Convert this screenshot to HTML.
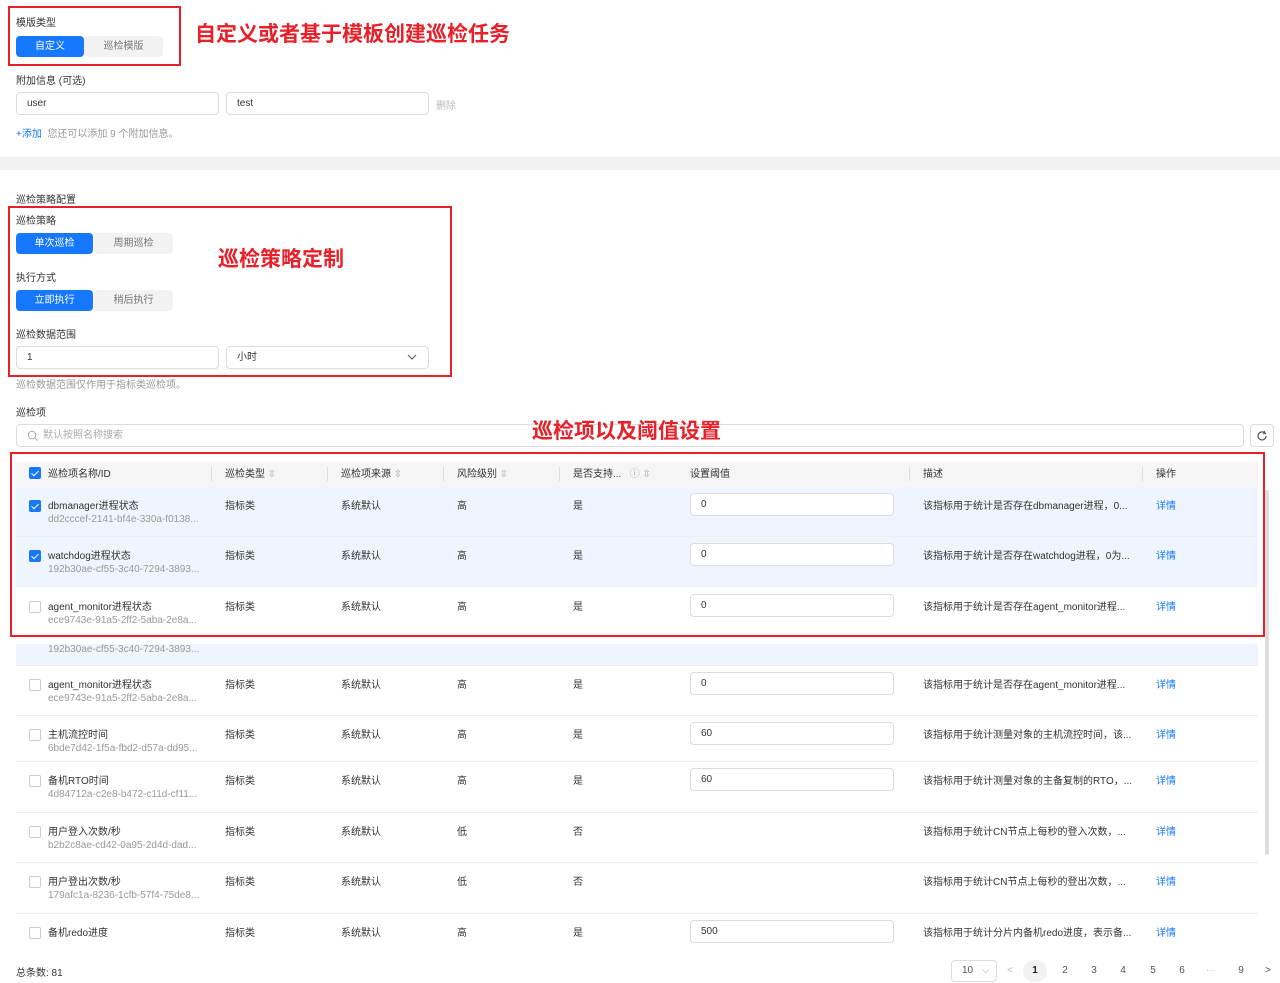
<!DOCTYPE html>
<html><head><meta charset="utf-8"><style>
*{box-sizing:border-box;margin:0;padding:0}
body{width:1280px;height:983px;background:#fff;position:relative;overflow:hidden;font-family:"Liberation Sans","Noto Sans CJK SC",sans-serif;font-size:10px;color:#333}
.a{position:absolute;white-space:nowrap}
.red{position:absolute;border:2px solid #e8202a}
.rt{position:absolute;color:#e8202a;font-weight:bold;font-size:21px;white-space:nowrap;line-height:24px}
.btnb{position:absolute;background:#1677ff;color:#fff;border-radius:4px;text-align:center}
.btng{position:absolute;background:#f2f2f2;color:#777;border-radius:4px;text-align:center}
.inp{position:absolute;border:1px solid #dcdcdc;border-radius:4px;background:#fff;padding-left:10px}
.gray{color:#999}
.cb{position:absolute;width:12px;height:12px;border:1px solid #ccc;border-radius:2px;background:#fff}
.cbc{background:#1677ff;border-color:#1677ff}
.cbc:after{content:"";position:absolute;left:3px;top:1px;width:3px;height:6px;border:solid #fff;border-width:0 1.5px 1.5px 0;transform:rotate(45deg)}
.row{position:absolute;left:16px;width:1242px;border-bottom:1px solid #eee}
.blue{background:#eef5fe}
.th{position:absolute;top:462px;height:25px;line-height:25px;color:#333}
.lnk{color:#1677ff}
.pg{position:absolute;top:960px;height:22px;line-height:22px;width:24px;text-align:center;color:#555}
</style></head><body>

<div class="red" style="left:8px;top:6px;width:173px;height:60px"></div>
<div class="a" style="left:16px;top:14px">模版类型</div>
<div class="btnb" style="left:16px;top:36px;width:68px;height:21px;line-height:21px">自定义</div>
<div class="btng" style="left:84px;top:36px;width:79px;height:21px;line-height:21px">巡检模版</div>
<div class="rt" style="left:195px;top:23px">自定义或者基于模板创建巡检任务</div>

<div class="a" style="left:16px;top:72px">附加信息 (可选)</div>
<div class="inp" style="left:16px;top:92px;width:203px;height:23px;line-height:21px">user</div>
<div class="inp" style="left:226px;top:92px;width:203px;height:23px;line-height:21px">test</div>
<div class="a" style="left:436px;top:97px;color:#bbb">删除</div>
<div class="a" style="left:16px;top:125px"><span class="lnk">+添加</span> &nbsp;<span class="gray">您还可以添加 9 个附加信息。</span></div>

<div class="a" style="left:0;top:157px;width:1280px;height:13px;background:#f2f2f2"></div>

<div class="a" style="left:16px;top:191px">巡检策略配置</div>
<div class="red" style="left:8px;top:206px;width:444px;height:171px"></div>
<div class="a" style="left:16px;top:212px">巡检策略</div>
<div class="btnb" style="left:16px;top:233px;width:77px;height:21px;line-height:21px">单次巡检</div>
<div class="btng" style="left:94px;top:233px;width:79px;height:21px;line-height:21px">周期巡检</div>
<div class="rt" style="left:218px;top:248px">巡检策略定制</div>
<div class="a" style="left:16px;top:269px">执行方式</div>
<div class="btnb" style="left:16px;top:290px;width:77px;height:21px;line-height:21px">立即执行</div>
<div class="btng" style="left:94px;top:290px;width:79px;height:21px;line-height:21px">稍后执行</div>
<div class="a" style="left:16px;top:326px">巡检数据范围</div>
<div class="inp" style="left:16px;top:346px;width:203px;height:23px;line-height:21px">1</div>
<div class="inp" style="left:226px;top:346px;width:203px;height:23px;line-height:21px">小时</div>
<svg class="a" style="left:407px;top:353px" width="10" height="8"><path d="M1 2 L5 6 L9 2" fill="none" stroke="#666" stroke-width="1.2"/></svg>
<div class="a gray" style="left:16px;top:376px">巡检数据范围仅作用于指标类巡检项。</div>

<div class="a" style="left:16px;top:404px">巡检项</div>
<div class="inp" style="left:16px;top:424px;width:1228px;height:23px;line-height:21px;padding-left:26px;color:#aaa">默认按照名称搜索</div>
<svg class="a" style="left:27px;top:430px" width="11" height="11"><circle cx="5" cy="5" r="3.8" fill="none" stroke="#aaa"/><path d="M8 8L10.5 10.5" stroke="#aaa"/></svg>
<div class="inp" style="left:1250px;top:424px;width:24px;height:23px"></div>
<svg class="a" style="left:1256px;top:430px" width="12" height="12"><path d="M10 6A4 4 0 1 1 8.5 2.8" fill="none" stroke="#555" stroke-width="1.2"/><path d="M8 1L9.5 3.5L7 4" fill="none" stroke="#555"/></svg>
<div class="rt" style="left:532px;top:420px">巡检项以及阈值设置</div>

<div class="a" style="left:16px;top:462px;width:1242px;height:25px;background:#f5f5f5"></div>
<div class="cb cbc" style="left:29px;top:467px"></div>
<div class="th" style="left:48px">巡检项名称/ID</div>
<div class="th" style="left:225px">巡检类型 <span style="color:#aaa">⇳</span></div>
<div class="th" style="left:341px">巡检项来源 <span style="color:#aaa">⇳</span></div>
<div class="th" style="left:457px">风险级别 <span style="color:#aaa">⇳</span></div>
<div class="th" style="left:573px">是否支持... &nbsp; <span style="color:#aaa">ⓘ ⇳</span></div>
<div class="th" style="left:690px">设置阈值</div>
<div class="th" style="left:923px">描述</div>
<div class="th" style="left:1156px">操作</div>
<div class="a" style="left:211px;top:467px;width:1px;height:14px;background:#ddd"></div>
<div class="a" style="left:327px;top:467px;width:1px;height:14px;background:#ddd"></div>
<div class="a" style="left:443px;top:467px;width:1px;height:14px;background:#ddd"></div>
<div class="a" style="left:559px;top:467px;width:1px;height:14px;background:#ddd"></div>
<div class="a" style="left:909px;top:467px;width:1px;height:14px;background:#ddd"></div>
<div class="a" style="left:1142px;top:467px;width:1px;height:14px;background:#ddd"></div>

<div class="row blue" style="top:487px;height:50px"></div>
<div class="row blue" style="top:537px;height:50px"></div>
<div class="row" style="top:587px;height:50px"></div>
<div class="row blue" style="top:644px;height:22px"></div>
<div class="a gray" style="left:48px;top:644px">192b30ae-cf55-3c40-7294-3893...</div>
<div class="row" style="top:666px;height:50px"></div>
<div class="row" style="top:716px;height:46px"></div>
<div class="row" style="top:762px;height:51px"></div>
<div class="row" style="top:813px;height:50px"></div>
<div class="row" style="top:863px;height:51px"></div>

<div id="rows"></div>
<script>
var R=[
[487,1,'dbmanager进程状态','dd2cccef-2141-bf4e-330a-f0138...','高','是','0','该指标用于统计是否存在dbmanager进程，0...'],
[537,1,'watchdog进程状态','192b30ae-cf55-3c40-7294-3893...','高','是','0','该指标用于统计是否存在watchdog进程，0为...'],
[588,0,'agent_monitor进程状态','ece9743e-91a5-2ff2-5aba-2e8a...','高','是','0','该指标用于统计是否存在agent_monitor进程...'],
[666,0,'agent_monitor进程状态','ece9743e-91a5-2ff2-5aba-2e8a...','高','是','0','该指标用于统计是否存在agent_monitor进程...'],
[716,0,'主机流控时间','6bde7d42-1f5a-fbd2-d57a-dd95...','高','是','60','该指标用于统计测量对象的主机流控时间，该...'],
[762,0,'备机RTO时间','4d84712a-c2e8-b472-c11d-cf11...','高','是','60','该指标用于统计测量对象的主备复制的RTO，...'],
[813,0,'用户登入次数/秒','b2b2c8ae-cd42-0a95-2d4d-dad...','低','否','','该指标用于统计CN节点上每秒的登入次数，...'],
[863,0,'用户登出次数/秒','179afc1a-8236-1cfb-57f4-75de8...','低','否','','该指标用于统计CN节点上每秒的登出次数，...'],
[914,0,'备机redo进度','','高','是','500','该指标用于统计分片内备机redo进度，表示备...']];
var h='';
R.forEach(function(r){var t=r[0];
h+='<div class="cb'+(r[1]?' cbc':'')+'" style="left:29px;top:'+(t+13)+'px"></div>';
h+='<div class="a" style="left:48px;top:'+(t+10)+'px">'+r[2]+'</div>';
if(r[3])h+='<div class="a gray" style="left:48px;top:'+(t+27)+'px">'+r[3]+'</div>';
h+='<div class="a" style="left:225px;top:'+(t+10)+'px">指标类</div>';
h+='<div class="a" style="left:341px;top:'+(t+10)+'px">系统默认</div>';
h+='<div class="a" style="left:457px;top:'+(t+10)+'px">'+r[4]+'</div>';
h+='<div class="a" style="left:573px;top:'+(t+10)+'px">'+r[5]+'</div>';
if(r[6])h+='<div class="inp" style="left:690px;top:'+(t+6)+'px;width:204px;height:23px;line-height:21px">'+r[6]+'</div>';
h+='<div class="a" style="left:923px;top:'+(t+10)+'px">'+r[7]+'</div>';
h+='<div class="a lnk" style="left:1156px;top:'+(t+10)+'px">详情</div>';});
document.getElementById('rows').innerHTML=h;
</script>

<div class="a" style="left:1265px;top:490px;width:4px;height:365px;background:#ddd;border-radius:2px"></div>
<div class="red" style="left:10px;top:452px;width:1255px;height:185px"></div>

<div class="a" style="left:16px;top:964px">总条数: 81</div>
<div class="inp" style="left:951px;top:960px;width:46px;height:22px;line-height:20px;color:#555">10 <span style="color:#999;margin-left:6px">⌵</span></div>
<div class="pg" style="left:998px;color:#bbb">&lt;</div>
<div class="pg" style="left:1023px;background:#f2f2f2;border-radius:11px;font-weight:bold;color:#222">1</div>
<div class="pg" style="left:1053px">2</div>
<div class="pg" style="left:1082px">3</div>
<div class="pg" style="left:1111px">4</div>
<div class="pg" style="left:1141px">5</div>
<div class="pg" style="left:1170px">6</div>
<div class="pg" style="left:1199px;color:#bbb">···</div>
<div class="pg" style="left:1229px">9</div>
<div class="pg" style="left:1256px">&gt;</div>
</body></html>
